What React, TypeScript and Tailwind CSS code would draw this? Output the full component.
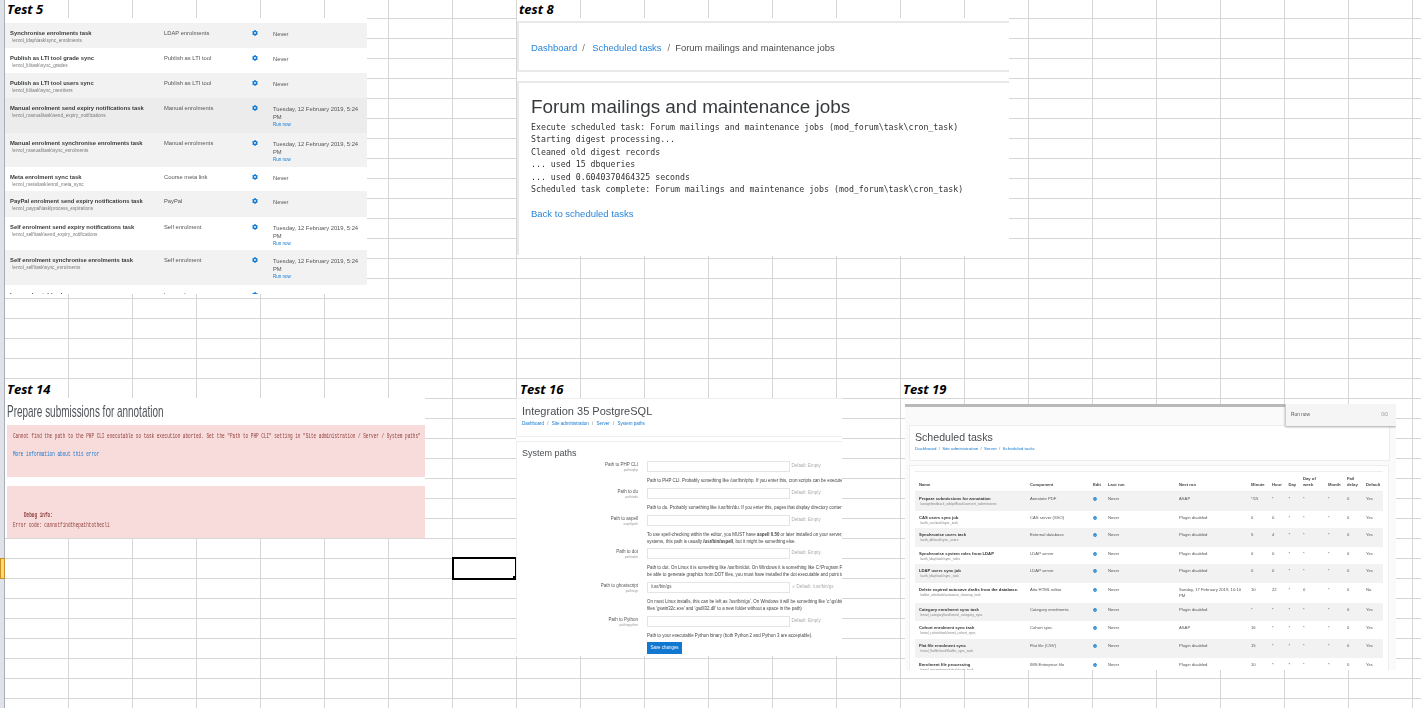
import { ReactNode } from 'react'
import { FaCog } from 'react-icons/fa'

const DATE = 'Tuesday, 12 February 2019, 5:24 PM'

const enrolTasks = [
  { name: 'Synchronise enrolments task', path: '\\enrol_ldap\\task\\sync_enrolments', comp: 'LDAP enrolments', h: 'h-[25px]', bg: 'bg-[#f2f2f2]' },
  { name: 'Publish as LTI tool grade sync', path: '\\enrol_lti\\task\\sync_grades', comp: 'Publish as LTI tool', h: 'h-[25px]', bg: 'bg-white' },
  { name: 'Publish as LTI tool users sync', path: '\\enrol_lti\\task\\sync_members', comp: 'Publish as LTI tool', h: 'h-[25px]', bg: 'bg-[#f2f2f2]' },
  { name: 'Manual enrolment send expiry notifications task', path: '\\enrol_manual\\task\\send_expiry_notifications', comp: 'Manual enrolments', h: 'h-[35px]', bg: 'bg-[#ececec]', due: true },
  { name: 'Manual enrolment synchronise enrolments task', path: '\\enrol_manual\\task\\sync_enrolments', comp: 'Manual enrolments', h: 'h-[34px]', bg: 'bg-[#f2f2f2]', due: true },
  { name: 'Meta enrolment sync task', path: '\\enrol_meta\\task\\enrol_meta_sync', comp: 'Course meta link', h: 'h-[24px]', bg: 'bg-white' },
  { name: 'PayPal enrolment send expiry notifications task', path: '\\enrol_paypal\\task\\process_expirations', comp: 'PayPal', h: 'h-[26px]', bg: 'bg-[#f2f2f2]' },
  { name: 'Self enrolment send expiry notifications task', path: '\\enrol_self\\task\\send_expiry_notifications', comp: 'Self enrolment', h: 'h-[33px]', bg: 'bg-white', due: true },
  { name: 'Self enrolment synchronise enrolments task', path: '\\enrol_self\\task\\sync_enrolments', comp: 'Self enrolment', h: 'h-[35px]', bg: 'bg-[#f2f2f2]', due: true },
  { name: 'Legacy log table cleanup', path: '', comp: 'Legacy log', h: 'h-[25px]', bg: 'bg-white' },
]

const pathRows = [
  { label: 'Path to PHP CLI', key: 'pathtophp', mt: 'mt-[2px]', desc: ['Path to PHP CLI. Probably something like /usr/bin/php. If you enter this, cron scripts can be executed from this site.'] },
  { label: 'Path to du', key: 'pathtodu', mt: 'mt-[4.5px]', desc: ['Path to du. Probably something like /usr/bin/du. If you enter this, pages that display directory contents will run much faster.'] },
  { label: 'Path to aspell', key: 'aspellpath', mt: 'mt-[4.5px]', desc: [<>To use spell-checking within the editor, you MUST have <b>aspell 0.50</b> or later installed on your server, and you must specify the path.</>, <>systems, this path is usually <b>/usr/bin/aspell</b>, but it might be something else.</>] },
  { label: 'Path to dot', key: 'pathtodot', mt: 'mt-[3.5px]', desc: ['Path to dot. On Linux it is something like /usr/bin/dot. On Windows it is something like C:\\Program Files (x86)\\Graphviz2.38\\bin\\dot.exe.', 'be able to generate graphics from DOT files, you must have installed the dot executable and point to it here.'] },
  { label: 'Path to ghostscript', key: 'pathtogs', mt: 'mt-[4.5px]', value: '/usr/bin/gs', ok: true, desc: ["On most Linux installs, this can be left as '/usr/bin/gs'. On Windows it will be something like 'c:\\gs\\bin\\gswin32c.exe' (make sure there are no", "files 'gswin32c.exe' and 'gsdll32.dll' to a new folder without a space in the path)"] },
  { label: 'Path to Python', key: 'pathtopython', mt: 'mt-[4.5px]', desc: ['Path to your executable Python binary (both Python 2 and Python 3 are acceptable).'] },
]

const schedHead = ['Name', 'Component', 'Edit', 'Last run', 'Next run', 'Minute', 'Hour', 'Day', 'Day of week', 'Month', 'Fail delay', 'Default']

const schedRows = [
  { name: 'Prepare submissions for annotation', path: '\\assignfeedback_editpdf\\task\\convert_submissions', comp: 'Annotate PDF', next: 'ASAP', t: ['*/15', '*', '*', '*', '*', '0', 'Yes'], h: 'h-[18.5px]' },
  { name: 'CAS users sync job', path: '\\auth_cas\\task\\sync_task', comp: 'CAS server (SSO)', next: 'Plugin disabled', t: ['0', '0', '*', '*', '*', '0', 'Yes'], h: 'h-[17.5px]' },
  { name: 'Synchronise users task', path: '\\auth_db\\task\\sync_users', comp: 'External database', next: 'Plugin disabled', t: ['5', '4', '*', '*', '*', '0', 'Yes'], h: 'h-[18.5px]' },
  { name: 'Synchronise system roles from LDAP', path: '\\auth_ldap\\task\\sync_roles', comp: 'LDAP server', next: 'Plugin disabled', t: ['0', '0', '*', '*', '*', '0', 'Yes'], h: 'h-[17.5px]' },
  { name: 'LDAP users sync job', path: '\\auth_ldap\\task\\sync_task', comp: 'LDAP server', next: 'Plugin disabled', t: ['0', '0', '*', '*', '*', '0', 'Yes'], h: 'h-[19px]' },
  { name: 'Delete expired autosave drafts from the database.', path: '\\editor_atto\\task\\autosave_cleanup_task', comp: 'Atto HTML editor', next: 'Sunday, 17 February 2019, 10:10 PM', t: ['10', '22', '*', '0', '*', '0', 'No'], h: 'h-[19.5px]' },
  { name: 'Category enrolment sync task', path: '\\enrol_category\\task\\enrol_category_sync', comp: 'Category enrolments', next: 'Plugin disabled', t: ['*', '*', '*', '*', '*', '0', 'Yes'], h: 'h-[18.5px]' },
  { name: 'Cohort enrolment sync task', path: '\\enrol_cohort\\task\\enrol_cohort_sync', comp: 'Cohort sync', next: 'ASAP', t: ['16', '*', '*', '*', '*', '0', 'Yes'], h: 'h-[18px]' },
  { name: 'Flat file enrolment sync', path: '\\enrol_flatfile\\task\\flatfile_sync_task', comp: 'Flat file (CSV)', next: 'Plugin disabled', t: ['15', '*', '*', '*', '*', '0', 'Yes'], h: 'h-[19px]' },
  { name: 'Enrolment file processing', path: '\\enrol_imsenterprise\\task\\cron_task', comp: 'IMS Enterprise file', next: 'Plugin disabled', t: ['10', '*', '*', '*', '*', '0', 'Yes'], h: 'h-[19px]' },
]

const schedGrid = 'grid grid-cols-[115px_63px_15px_71px_72px_21px_16.5px_14.5px_25px_19px_19px_17px]'

function Label({ children, className }: { children: ReactNode; className: string }) {
  return (
    <div className={`absolute font-['Open_Sans',sans-serif] text-[13px] leading-[18px] font-bold italic text-black ${className}`}>
      {children}
    </div>
  )
}

function Squeezed({ children, className = '' }: { children: ReactNode; className?: string }) {
  return <div className={`origin-left scale-x-[0.67] whitespace-nowrap ${className}`}>{children}</div>
}

function EnrolPanel() {
  return (
    <div className="absolute left-[5px] top-[18px] h-[276px] w-[362px] overflow-hidden bg-white pt-[5px] font-['Liberation_Sans',sans-serif] text-[#373a3c] blur-[0.4px]">
      {enrolTasks.map((task) => (
        <div key={task.name} className={`flex pl-[5px] pt-[6.5px] ${task.h} ${task.bg}`}>
          <div className="w-[154px] shrink-0">
            <div className="text-[5.85px] leading-[7px] font-bold">{task.name}</div>
            <div className="ml-[2px] mt-[1px] text-[4.7px] leading-[5px] text-[#777]">{task.path}</div>
          </div>
          <div className="w-[85px] shrink-0 text-[5.8px] leading-[7px] text-[#555]">{task.comp}</div>
          <div className="flex w-[24px] shrink-0 justify-start pl-[3px] pt-[0.5px]">
            <FaCog className="size-[6px] text-[#1177d1]" />
          </div>
          <div className="w-[88px] shrink-0 text-[5.8px] leading-[8.6px] text-[#555]">
            {task.due ? DATE : 'Never'}
            {task.due && <div className="text-[4.5px] leading-[6px] text-[#1177d1]">Run now</div>}
          </div>
        </div>
      ))}
    </div>
  )
}

function CronPanel() {
  return (
    <div className="absolute left-[517px] top-[18px] h-[238px] w-[492px] bg-white pt-[3px] font-['Liberation_Sans',sans-serif] text-[#4a4d50] blur-[0.3px]">
      <div className="flex h-[51px] items-center border-y-2 border-l-2 border-[#e9e9e9] pl-[12px] pt-[3px] text-[9.45px] whitespace-nowrap">
        <span className="text-[#2a85d8]">Dashboard</span>
        <span className="ml-[5px] mr-[7.5px] text-[#777]">/</span>
        <span className="text-[#2a85d8]">Scheduled tasks</span>
        <span className="ml-[6px] mr-[5px] text-[#777]">/</span>
        <span>Forum mailings and maintenance jobs</span>
      </div>
      <div className="mt-[9px] h-[174px] border-t-2 border-l-2 border-[#e9e9e9] pl-[12px] pt-[12px]">
        <h1 className="text-[18.9px] leading-[24px] text-[#373a3c]">Forum mailings and maintenance jobs</h1>
        <pre className="mt-[2px] font-['DejaVu_Sans_Mono',monospace] text-[8.25px] leading-[12.4px] text-[#333]">
          {`Execute scheduled task: Forum mailings and maintenance jobs (mod_forum\\task\\cron_task)
Starting digest processing...
Cleaned old digest records
... used 15 dbqueries
... used 0.6040370464325 seconds
Scheduled task complete: Forum mailings and maintenance jobs (mod_forum\\task\\cron_task)`}
        </pre>
        <div className="mt-[12.5px] text-[9.5px] leading-[12px] text-[#2a85d8]">Back to scheduled tasks</div>
      </div>
    </div>
  )
}

function ErrorPanel() {
  return (
    <div className="absolute left-[5px] top-[398px] h-[140px] w-[420px] bg-white pl-[2px] blur-[0.2px]">
      <div className="origin-left scale-x-[0.585] whitespace-nowrap pt-[3px] font-['Liberation_Sans',sans-serif] text-[17px] leading-[21px] text-[#4f5358]">
        Prepare submissions for annotation
      </div>
      <div className="mt-[3px] h-[52px] bg-[#f7dcdb] pl-[6px] pt-[8px] font-['Liberation_Mono',monospace] text-[6.5px] leading-[8px] text-[#8e3a38]">
        <Squeezed>
          Cannot find the path to the PHP CLI executable so task execution aborted. Set the "Path to PHP CLI" setting in "Site administration / Server / System paths"
        </Squeezed>
        <Squeezed className="mt-[10px] text-[#1177d1]">More information about this error</Squeezed>
      </div>
      <div className="mt-[9px] h-[52px] bg-[#f7dcdb] pl-[6px] pt-[25px] font-['Liberation_Mono',monospace] text-[6.5px] leading-[10px] text-[#8e3a38]">
        <Squeezed className="ml-[11px] font-bold">Debug info:</Squeezed>
        <Squeezed>Error code: cannotfindthepathtothecli</Squeezed>
      </div>
    </div>
  )
}

function PathsPanel() {
  return (
    <div className="absolute left-[516px] top-[398px] h-[258px] w-[326px] overflow-hidden bg-white font-['Liberation_Sans',sans-serif] text-[#373a3c] blur-[0.4px]">
      <div className="h-[39px] border-y border-l border-[#eeeeee] pl-[5px] pt-[5px]">
        <div className="text-[11px] leading-[15px] text-[#4a4d50]">Integration 35 PostgreSQL</div>
        <div className="mt-[2px] text-[4.5px] leading-[6px] text-[#1177d1]">
          Dashboard <span className="mx-[2px] text-[#777]">/</span> Site administration <span className="mx-[2px] text-[#777]">/</span> Server <span className="mx-[2px] text-[#777]">/</span> System paths
        </div>
      </div>
      <div className="mt-[4px] border-t border-l border-[#eeeeee] pl-[5px] pt-[5px]">
        <div className="text-[9px] leading-[12px] text-[#4a4d50]">System paths</div>
        {pathRows.map((row) => (
          <div key={row.key} className={`flex ${row.mt}`}>
            <div className="w-[116px] shrink-0 pt-[1px] text-right">
              <div className="text-[4.5px] leading-[6px] text-[#555]">{row.label}</div>
              <div className="text-[3.2px] leading-[5px] text-[#999]">{row.key}</div>
            </div>
            <div className="ml-[9px] w-[200px] shrink-0">
              <div className="flex items-center whitespace-nowrap">
                <div className="flex h-[11px] w-[143px] shrink-0 items-center border border-[#e4e4e4] pl-[3px] text-[4.45px] text-[#555]">{row.value}</div>
                <span className="ml-[1.5px] text-[4.45px] text-[#aaa]">{row.ok && <span className="mr-[2px] text-[#5a9e3a]">✓</span>}Default: {row.value ?? 'Empty'}</span>
              </div>
              <div className="mt-[4.5px] whitespace-nowrap text-[4.45px] leading-[7px] text-[#444]">
                {row.desc.map((line, i) => <div key={i}>{line}</div>)}
              </div>
            </div>
          </div>
        ))}
        <div className="ml-[125px] mt-[3.5px] flex h-[12px] w-[35px] items-center justify-center bg-[#1177d1] text-[4.45px] text-white">Save changes</div>
      </div>
    </div>
  )
}

function SchedulePanel() {
  return (
    <div className="absolute left-[905px] top-[404px] h-[266px] w-[491px] overflow-hidden bg-[#fafafa] font-['Liberation_Sans',sans-serif] text-[#555] blur-[0.4px]">
      <div className="h-[3px] bg-[#b9b9b9]" />
      <div className="ml-[4px] mt-[18px] h-[36px] w-[481px] border border-[#eeeeee] bg-white pl-[5px] pt-[4px]">
        <div className="text-[10.6px] leading-[15px] text-[#4a4d50]">Scheduled tasks</div>
        <div className="mt-[1px] text-[4.4px] leading-[6px] text-[#1177d1]">
          Dashboard <span className="mx-[1px] text-[#777]">/</span> Site administration <span className="mx-[1px] text-[#777]">/</span> Server <span className="mx-[1px] text-[#777]">/</span> Scheduled tasks
        </div>
      </div>
      <div className="ml-[4px] mt-[4px] h-[210px] w-[480px] border border-[#eeeeee] bg-white px-[5px] pt-[5px]">
        <div className={`${schedGrid} h-[21px] items-end border-y border-[#eeeeee] pb-[3px] text-[4.2px] leading-[6px] font-bold text-[#444]`}>
          {schedHead.map((head, i) => (
            <div key={head} className={i === 0 ? 'pl-[4px]' : 'pr-[3px]'}>{head}</div>
          ))}
        </div>
        {schedRows.map((row, i) => (
          <div key={row.name} className={`${schedGrid} ${row.h} pt-[4px] text-[4.2px] leading-[6px] ${i % 2 === 0 ? 'bg-[#f2f2f2]' : 'bg-white'}`}>
            <div className="pl-[4px]">
              <div className="whitespace-nowrap font-bold text-[#333]">{row.name}</div>
              <div className="ml-[1px] whitespace-nowrap text-[3.4px] leading-[4px] text-[#888]">{row.path}</div>
            </div>
            <div>{row.comp}</div>
            <FaCog className="mt-[1px] size-[4px] text-[#1177d1]" />
            <div>Never</div>
            <div className="pr-[4px]">{row.next}</div>
            {row.t.map((cell, j) => <div key={j}>{cell}</div>)}
          </div>
        ))}
      </div>
      <div className="absolute right-0 top-0 flex h-[22px] w-[111px] items-center justify-between border-l border-[#cfcfcf] bg-[#f5f5f5] pl-[5px] pr-[8px] text-[4.8px] shadow-[0_1px_2px_rgba(0,0,0,0.35)]">
        <span>Run now</span>
        <span className="text-[#999]">0/0</span>
      </div>
    </div>
  )
}

export default function App() {
  return (
    <div className="relative h-[708px] w-[1421px] overflow-hidden bg-white bg-[linear-gradient(to_right,#d6d6d6_1px,transparent_1px),linear-gradient(to_bottom,#d6d6d6_1px,transparent_1px)] bg-[size:64px_20px] bg-[position:4px_18px]">
      <div className="absolute inset-y-0 left-0 w-[5px] border-r border-[#a9adb5] bg-[#dfe2e8]" />
      <div className="absolute left-0 top-[558px] h-[21px] w-[5px] border border-[#c8902a] bg-[#ffd966]" />
      <div className="absolute left-[452px] top-[557px] h-[23px] w-[65px] border-2 border-black">
        <div className="absolute -bottom-[2px] -right-[2px] size-[4px] bg-black" />
      </div>

      <Label className="left-[7px] top-0">Test 5</Label>
      <Label className="left-[519px] top-0">test 8</Label>
      <Label className="left-[7px] top-[380px]">Test 14</Label>
      <Label className="left-[520px] top-[380px]">Test 16</Label>
      <Label className="left-[903px] top-[380px]">Test 19</Label>

      <EnrolPanel />
      <CronPanel />
      <ErrorPanel />
      <PathsPanel />
      <SchedulePanel />
    </div>
  )
}
